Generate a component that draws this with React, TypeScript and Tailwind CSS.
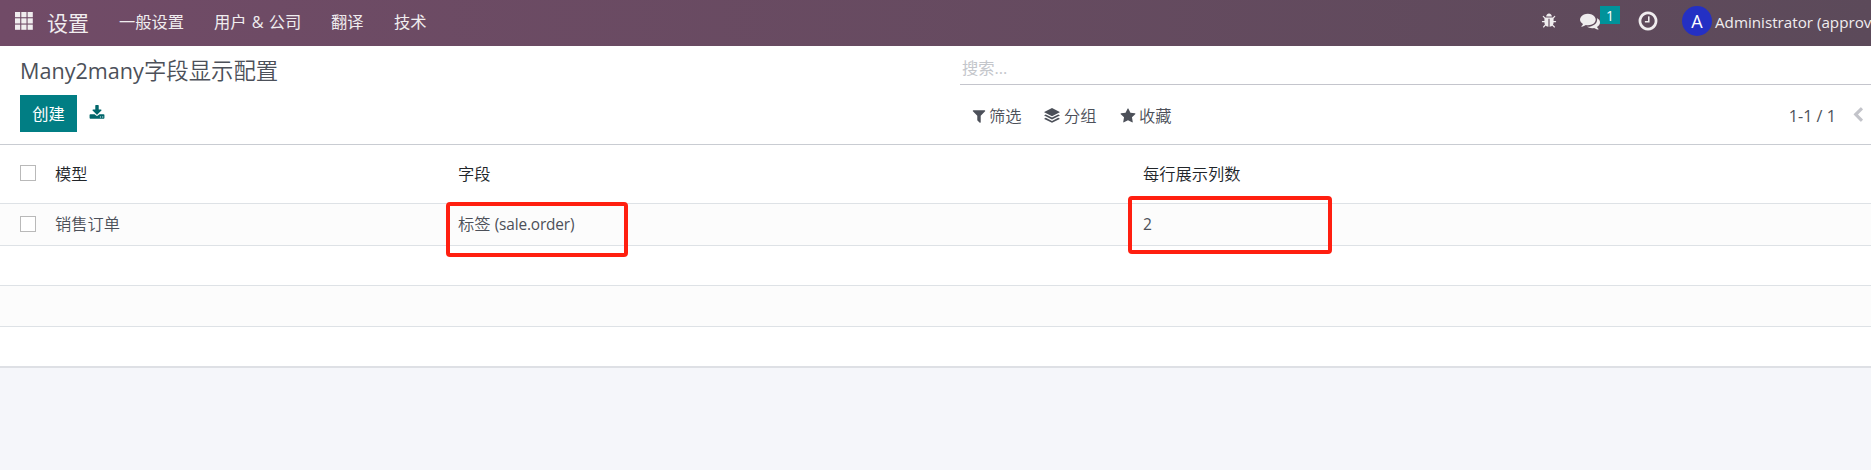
import React from "react";

const PATHS = {
  filter:
    "M1595 295q17 41-14 70l-493 493v742q0 42-39 59-13 5-25 5-27 0-45-19l-256-256q-19-19-19-45v-486l-493-493q-31-29-14-70 17-39 59-39h1280q42 0 59 39z",
  star:
    "M1728 647q0 22-26 48l-363 354 86 500q1 7 1 20 0 21-10.5 35.5t-30.5 14.5q-19 0-40-12l-449-236-449 236q-22 12-40 12-21 0-31.5-14.5t-10.5-35.5q0-6 2-20l86-500-364-354q-25-27-25-48 0-37 56-46l502-73 225-455q19-41 49-41t49 41l225 455 502 73q56 9 56 46z",
  clock:
    "M1024 544v448q0 14-9 23t-23 9h-320q-14 0-23-9t-9-23v-64q0-14 9-23t23-9h224v-352q0-14 9-23t23-9h64q14 0 23 9t9 23zm416 352q0-148-73-273t-198-198-273-73-273 73-198 198-73 273 73 273 198 198 273 73 273-73 198-198 73-273zm224 0q0 209-103 385.5t-279.5 279.5-385.5 103-385.5-103-279.5-279.5-103-385.5 103-385.5 279.5-279.5 385.5-103 385.5 103 279.5 279.5 103 385.5z",
  comments:
    "M1408 768q0 139-94 257t-256.5 186.5-353.5 68.5q-86 0-176-16-124 88-278 128-36 9-86 16h-3q-11 0-20.5-8t-11.5-21q-1-3-1-6.5t.5-6.5 2-6l2.5-5 3.5-5.5 4-5 4.5-5 4-4.5q5-6 23-25t26-29.5 22.5-29 25-38.5 20.5-44q-124-72-195-177t-71-224q0-139 94-257t256.5-186.5 353.5-68.5 353.5 68.5 256.5 186.5 94 257zm384 256q0 120-71 224.5t-195 176.5q10 24 20.5 44t25 38.5 22.5 29 26 29.5 23 25q1 1 4 4.5t4.5 5 4 5 3.5 5.5l2.5 5 2 6 .5 6.5-1 6.5q-3 14-13 22t-22 7q-50-7-86-16-154-40-278-128-90 16-176 16-271 0-472-132 58 4 88 4 161 0 309-45t264-129q125-92 192-212t67-254q0-77-23-152 129 71 204 178t75 230z",
  bug:
    "M1696 960q0 26-19 45t-45 19h-224q0 171-67 290l208 209q19 19 19 45t-19 45q-18 19-45 19t-45-19l-198-197q-5 5-15 13t-42 28.5-65 36.5-82 29-97 13v-896h-128v896q-51 0-101.5-13.5t-87-33-66-39-43.5-32.5l-15-14-183 207q-20 21-48 21-24 0-43-16-19-18-20.5-44.5t15.5-46.5l202-227q-58-114-58-274h-224q-26 0-45-19t-19-45 19-45 45-19h224v-294l-173-173q-19-19-19-45t19-45 45-19 45 19l173 173h844l173-173q19-19 45-19t45 19 19 45-19 45l-173 173v294h224q26 0 45 19t19 45zm-480-576h-640q0-133 93.5-226.5t226.5-93.5 226.5 93.5 93.5 226.5z",
  download:
    "M1344 1344q0-26-19-45t-45-19-45 19-19 45 19 45 45 19 45-19 19-45zm256 0q0-26-19-45t-45-19-45 19-19 45 19 45 45 19 45-19 19-45zm128-224v320q0 40-28 68t-68 28h-1472q-40 0-68-28t-28-68v-320q0-40 28-68t68-28h465l135 136q58 56 136 56t136-56l136-136h464q40 0 68 28t28 68zm-325-569q17 41-14 70l-448 448q-18 19-45 19t-45-19l-448-448q-31-29-14-70 17-39 59-39h256v-448q0-26 19-45t45-19h256q26 0 45 19t19 45v448h256q42 0 59 39z",
  chevronLeft:
    "M1427 301l-531 531 531 531q19 19 19 45t-19 45l-166 166q-19 19-45 19t-45-19l-742-742q-19-19-19-45t19-45l742-742q19-19 45-19t45 19l166 166q19 19 19 45t-19 45z",
  layers:
    "M896 0l870 440q30 20 0 40l-870 430L26 480q-30-20 0-40zM26 800l170-85 700 350 700-350 170 85q30 20 0 40l-870 435-870-435q-30-20 0-40zM26 1190l170-85 700 350 700-350 170 85q30 20 0 40l-870 435-870-435q-30-20 0-40z",
};

function Icon({ name, className }: { name: keyof typeof PATHS; className: string }) {
  return (
    <svg viewBox="0 0 1792 1792" fill="currentColor" aria-hidden="true" className={`shrink-0 overflow-visible ${className}`}>
      <path d={PATHS[name]} />
    </svg>
  );
}

function AppsIcon() {
  return (
    <svg viewBox="0 0 18 18" fill="currentColor" aria-hidden="true" className="mb-1 size-[18px] shrink-0">
      {[0, 6.3, 12.6].map((y) =>
        [0, 6.3, 12.6].map((x) => <rect key={`${x}-${y}`} x={x} y={y} width="5.2" height="5.2" />)
      )}
    </svg>
  );
}

function Navbar() {
  return (
    <header className="flex h-[46px] w-full items-center overflow-hidden bg-linear-to-r from-[#714b67] to-[#5c4a5a] pl-[15px] text-[#f0edef]">
      <AppsIcon />
      <span className="ml-[14px] w-[72px] shrink-0 text-[21px] leading-[44px]">设置</span>
      <nav className="mb-[2px] flex shrink-0 items-center whitespace-nowrap text-[16.25px] leading-[44px]">
        <a className="w-[95px]">一般设置</a>
        <a className="w-[117px] [word-spacing:1px]">用户 &amp; 公司</a>
        <a className="w-[63px]">翻译</a>
        <a>技术</a>
      </nav>
      <div className="ml-auto flex w-[330px] shrink-0 items-center whitespace-nowrap">
        <Icon name="bug" className="mb-1 size-4" />
        <div className="relative ml-[23px] h-[46px] w-[61px] shrink-0 pt-[11px]">
          <Icon name="comments" className="size-5" />
          <span className="absolute left-[20px] top-[6px] flex h-[18px] w-[20px] items-center justify-center bg-[#00929a] text-[14px] text-white">
            1
          </span>
        </div>
        <Icon name="clock" className="-ml-[4px] mb-[5px] size-[22px]" />
        <span className="mb-[4px] ml-[23px] flex size-[30px] shrink-0 items-center justify-center rounded-full bg-[#2430c4] text-[18px] text-white">
          A
        </span>
        <span className="mb-[2px] ml-[3px] text-[15.2px] leading-[44px]">Administrator (approv</span>
      </div>
    </header>
  );
}

function ControlPanel() {
  return (
    <section className="flex h-[99px] border-b border-[#c9ccd2] text-[#4c5059]">
      <div className="w-[960px] pl-5">
        <h1 className="mt-[8px] h-[34px] text-[22.4px] font-[350] leading-[34px]">
          <span className="text-[21.6px] font-normal">Many2many</span>字段显示配置
        </h1>
        <div className="mt-[7px] flex">
          <button className="h-[37px] w-[57px] bg-[#017e84] pt-[2px] text-[16.25px] text-white">创建</button>
          <button className="ml-3 mt-[10px] h-4 text-[#01666b]">
            <Icon name="download" className="size-4" />
          </button>
        </div>
      </div>
      <div className="flex-1">
        <div className="h-[39px] border-b border-[#c4c5cc] pl-[2px] text-[16.25px] leading-[44px] text-[#c4c6cb]">搜索...</div>
        <div className="flex h-[60px] items-center pt-[2px] text-[16.25px] font-[350]">
          <div className="flex w-[72px] items-center gap-[2px] pl-[11px]">
            <Icon name="filter" className="size-4" />
            筛选
          </div>
          <div className="flex w-[76px] items-center gap-1 pl-[12px]">
            <Icon name="layers" className="size-4" />
            分组
          </div>
          <div className="flex items-center gap-[3px] pl-[12px]">
            <Icon name="star" className="size-4" />
            收藏
          </div>
          <span className="ml-auto text-[16.2px] font-normal">1-1 / 1</span>
          <Icon name="chevronLeft" className="mb-[3px] ml-[14px] mr-[5px] size-4 text-[#c3c4ca]" />
        </div>
      </div>
    </section>
  );
}

function Checkbox() {
  return <span className="mb-[2px] block size-4 border border-[#b9b9b9] bg-white" />;
}

function ListView() {
  return (
    <section className="border-b-2 border-[#dee0e5] text-[16.25px] font-[350] text-[#4c5059]">
      <div className="grid h-[59px] grid-cols-[35px_403px_685px_1fr] items-center border-b border-[#dee2e6] pl-5 text-[#212529]">
        <Checkbox />
        <span>模型</span>
        <span>字段</span>
        <span>每行展示列数</span>
      </div>
      <div className="grid h-[42px] grid-cols-[35px_403px_685px_1fr] items-center border-b border-[#dee2e6] bg-[#fcfcfc] pl-5">
        <Checkbox />
        <span>销售订单</span>
        <span className="relative">
          标签 <span className="text-[15.4px] font-normal tracking-[-0.15px]">(sale.order)</span>
          <span className="absolute -left-[12px] -top-[10px] h-[55px] w-[182px] rounded-[4px] border-4 border-[#ff1f10]" />
        </span>
        <span className="relative">
          <span className="text-[15.6px] font-normal">2</span>
          <span className="absolute -left-[15px] -top-[16px] h-[58px] w-[204px] rounded-[4px] border-4 border-[#ff1f10]" />
        </span>
      </div>
      <div className="h-10 border-b border-[#dee2e6]" />
      <div className="h-[41px] border-b border-[#dee2e6] bg-[#fcfcfc]" />
      <div className="h-[39px]" />
    </section>
  );
}

export default function App() {
  return (
    <main className="h-[470px] w-full overflow-hidden bg-[#f5f6fa] font-['Open_Sans','Noto_Sans_CJK_SC',sans-serif]">
      <Navbar />
      <div className="bg-white">
        <ControlPanel />
        <ListView />
      </div>
    </main>
  );
}
